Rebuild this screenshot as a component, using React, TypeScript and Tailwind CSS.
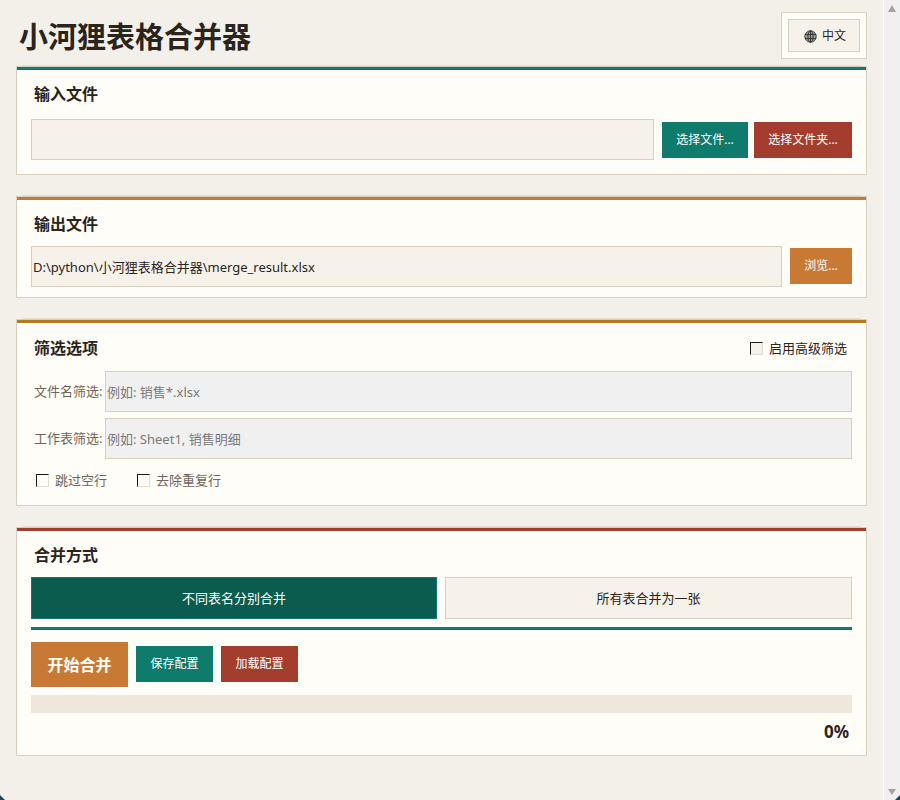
import React from "react"

const font = "font-['Noto_Sans','Noto_Sans_CJK_SC',sans-serif]"

function Card({ bar, className, children }: { bar: string; className: string; children: React.ReactNode }) {
  return (
    <section className={`relative border border-[#d9cfc0] bg-[#fffdf8] ${className}`}>
      <div className="absolute -top-[2px] left-[5px] right-[5px] h-px bg-[#e6dfd3]" />
      <div className={`h-[3px] ${bar}`} />
      {children}
    </section>
  )
}

function Title({ children }: { children: React.ReactNode }) {
  return <h2 className="text-base leading-6 font-bold text-[#2b241c]">{children}</h2>
}

function Btn({ color, w, children }: { color: string; w: string; children: React.ReactNode }) {
  return (
    <button className={`h-9 shrink-0 text-xs text-[#fffdf8] ${color} ${w}`}>{children}</button>
  )
}

function Check({ label, bg, text }: { label: string; bg: string; text: string }) {
  return (
    <label className={`flex items-center gap-[6px] text-[13px] leading-5 ${text}`}>
      <span className={`block h-[13px] w-[13px] border border-t-[#1a1a1a] border-l-[#1a1a1a] border-b-[#e0dcd4] border-r-[#e0dcd4] ${bg}`} />
      {label}
    </label>
  )
}

function FilterRow({ label, placeholder }: { label: string; placeholder: string }) {
  return (
    <div className="flex h-[41px] items-center">
      <span className="w-[71px] shrink-0 text-[13px] whitespace-nowrap text-[#6f665a]">{label}</span>
      <input
        readOnly
        placeholder={placeholder}
        className="h-full min-w-0 flex-1 border border-[#d9cfc0] bg-[#f0f0f0] px-[1px] text-[13px] placeholder:text-[#7a7a7a]"
      />
    </div>
  )
}

export default function App() {
  return (
    <div className={`flex h-screen overflow-hidden bg-[#f3f0ea] ${font}`}>
      <main className="min-w-0 flex-1 pr-[16px] pl-4">
        {/* header */}
        <header className="flex h-[66px] items-start justify-between">
          <h1 className="pt-[17px] pl-[3px] text-[29px] leading-10 font-bold text-[#2b241c]">小河狸表格合并器</h1>
          <div className="mt-3 border border-[#d9cfc0] bg-[#fffdf8] p-[6px]">
            <button className="flex h-[33px] w-[72px] items-center justify-center gap-[5px] border border-[#d9cfc0] bg-[#f6f2ea] pl-0.5 text-xs text-[#2b241c]">
              <svg viewBox="0 0 14 14" className="mt-px h-[13px] w-[13px]" fill="#9a9a94" stroke="#1f2326" strokeWidth="0.8">
                <circle cx="7" cy="7" r="6.2" />
                <ellipse cx="7" cy="7" rx="2.8" ry="6.2" fill="none" />
                <path d="M7 1v12M1 4.8h12M1 9.2h12" fill="none" />
              </svg>
              中文
            </button>
          </div>
        </header>

        {/* input */}
        <Card bar="bg-[#0f7b6c]" className="h-[109px]">
          <div className="px-[14px] pt-[12px]">
            <div className="pl-[3px]"><Title>输入文件</Title></div>
            <div className="mt-[13px] flex items-center">
              <input readOnly className="h-[41px] min-w-0 flex-1 border border-[#d9cfc0] bg-[#f6f2ea]" />
              <div className="ml-2 flex gap-[6px]">
                <Btn color="bg-[#0f7b6c]" w="w-[86px]">选择文件...</Btn>
                <Btn color="bg-[#a33d2e]" w="w-[98px]">选择文件夹...</Btn>
              </div>
            </div>
          </div>
        </Card>

        {/* output */}
        <Card bar="bg-[#c87a35]" className="mt-[21px] h-[102px]">
          <div className="px-[14px] pt-[12px]">
            <div className="pl-[3px]"><Title>输出文件</Title></div>
            <div className="mt-[10px] flex items-start gap-2">
              <input
                readOnly
                value="D:\python\小河狸表格合并器\merge_result.xlsx"
                className="h-[41px] min-w-0 flex-1 border border-[#d9cfc0] bg-[#f6f2ea] px-[1px] text-[13px] text-[#2b241c]"
              />
              <div className="mt-[2px]">
                <Btn color="bg-[#c87a35]" w="w-[62px]">浏览...</Btn>
              </div>
            </div>
          </div>
        </Card>

        {/* filters */}
        <Card bar="bg-[#b97a1f]" className="mt-[21px] h-[187px]">
          <div className="px-[14px] pt-[13px]">
            <div className="flex items-center justify-between pr-[5px] pl-[3px]">
              <Title>筛选选项</Title>
              <Check label="启用高级筛选" bg="bg-[#f6f2ea]" text="text-[#2b241c]" />
            </div>
            <div className="mt-[11px] flex flex-col gap-[6px] pl-[3px]">
              <FilterRow label="文件名筛选:" placeholder="例如: 销售*.xlsx" />
              <FilterRow label="工作表筛选:" placeholder="例如: Sheet1, 销售明细" />
            </div>
            <div className="mt-[11px] flex gap-[30px] pl-[5px]">
              <Check label="跳过空行" bg="bg-[#fffdf8]" text="text-[#6f665a]" />
              <Check label="去除重复行" bg="bg-[#fffdf8]" text="text-[#6f665a]" />
            </div>
          </div>
        </Card>

        {/* merge */}
        <Card bar="bg-[#a33d2e]" className="mt-[21px] h-[229px]">
          <div className="px-[14px] pt-[12px]">
            <div className="pl-[3px]"><Title>合并方式</Title></div>
            <div className="mt-[10px] flex gap-2">
              <button className="h-[42px] w-[406px] shrink-0 border border-[#0f7b6c] bg-[#0a5c4e] pt-[2px] text-[13px] text-[#fffdf8]">不同表名分别合并</button>
              <button className="h-[42px] flex-1 border border-[#d9cfc0] bg-[#f6f2ea] pt-[2px] text-[13px] text-[#2b241c]">所有表合并为一张</button>
            </div>
            <div className="mt-2 h-[3px] bg-[#0f7b6c]" />
            <div className="mt-3 flex items-center gap-2">
              <button className="h-[45px] w-[97px] bg-[#c87a35] text-[16px] font-bold text-[#fffdf8]">开始合并</button>
              <div className="mb-px flex gap-2">
                <Btn color="bg-[#0f7b6c]" w="w-[77px]">保存配置</Btn>
                <Btn color="bg-[#a33d2e]" w="w-[77px]">加载配置</Btn>
              </div>
            </div>
            <div className="mt-2 h-[18px] bg-[#efe7db]" />
            <div className="mt-[7px] pr-[3px] text-right text-[17px] leading-6 font-bold text-[#2b241c]">0%</div>
          </div>
        </Card>
      </main>

      {/* scrollbar */}
      <div className="flex w-[17px] shrink-0 flex-col items-center justify-between border-l border-white bg-[#f0f0f0] pt-[5px] pb-[5px]">
        <svg viewBox="0 0 8 7" className="h-[7px] w-2" fill="#a3a3a3"><path d="M4 0l4 7H0z" /></svg>
        <svg viewBox="0 0 8 6" className="h-[6px] w-2" fill="#a3a3a3"><path d="M0 0h8L4 6z" /></svg>
      </div>

      {/* window corners */}
      <svg viewBox="0 0 5 5" className="absolute bottom-0 left-0 h-[5px] w-[5px]" fill="#1f4a52"><path d="M0 0l5 5H0z" /></svg>
      <svg viewBox="0 0 5 5" className="absolute right-0 bottom-0 h-[5px] w-[5px]" fill="#1f4a52"><path d="M5 0v5H0z" /></svg>
    </div>
  )
}
